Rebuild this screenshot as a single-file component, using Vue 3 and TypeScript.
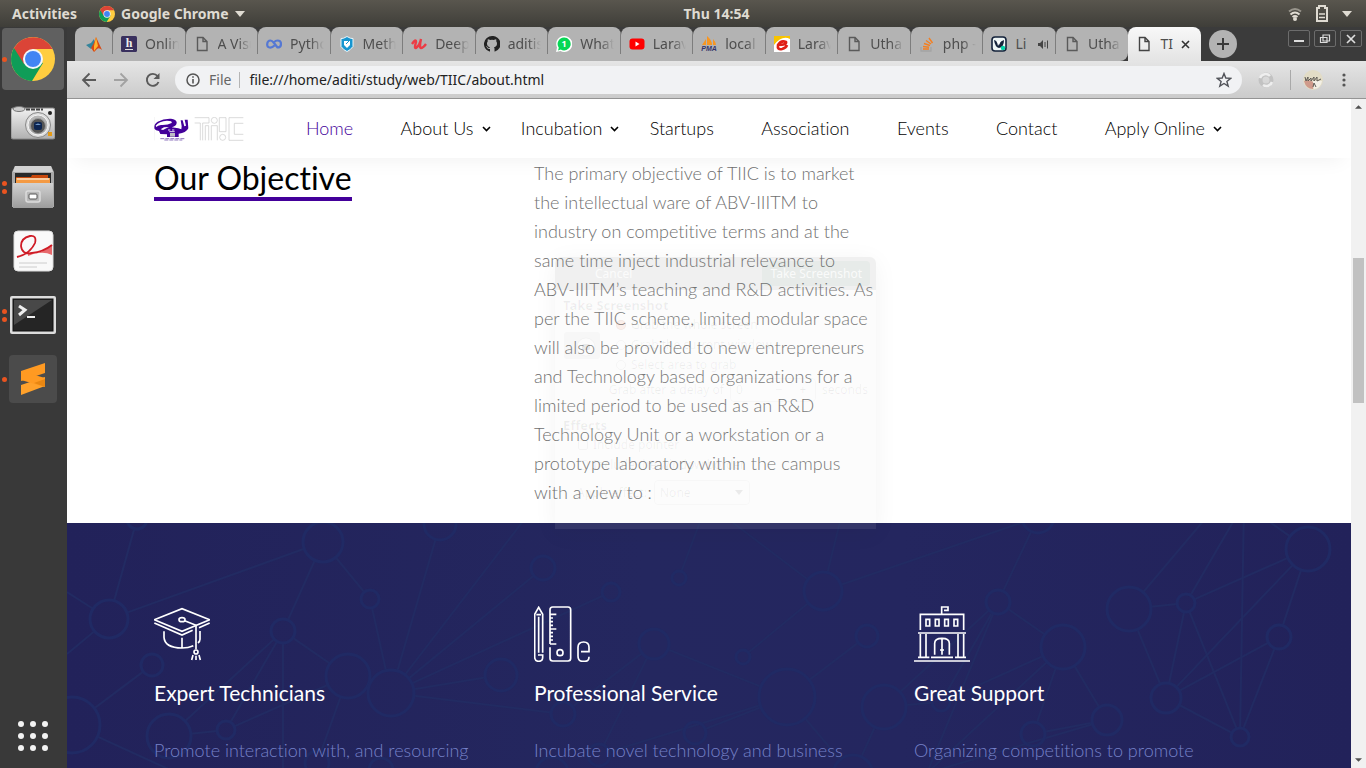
<script setup lang="ts">
interface Tab { icon: string; title: string; sound?: boolean }
interface NavItem { label: string; menu?: boolean; current?: boolean }
interface Feature { icon: string; title: string; text: string }

const tabs: Tab[] = [
  { icon: 'hack', title: 'Online' },
  { icon: 'page', title: 'A Visu' },
  { icon: 'colab', title: 'Python' },
  { icon: 'shield', title: 'Metho' },
  { icon: 'udemy', title: 'Deep L' },
  { icon: 'github', title: 'aditisin' },
  { icon: 'whatsapp', title: 'Whats' },
  { icon: 'youtube', title: 'Larave' },
  { icon: 'pma', title: 'local' },
  { icon: 'edu', title: 'Larave' },
  { icon: 'page', title: 'Utha' },
  { icon: 'stack', title: 'php -' },
  { icon: 'video', title: 'Li', sound: true },
  { icon: 'page', title: 'Utha' },
]

const nav: NavItem[] = [
  { label: 'Home', current: true },
  { label: 'About Us', menu: true },
  { label: 'Incubation', menu: true },
  { label: 'Startups' },
  { label: 'Association' },
  { label: 'Events' },
  { label: 'Contact' },
  { label: 'Apply Online', menu: true },
]

const dock = [
  { id: 'chrome', label: 'Google Chrome', dots: 1, active: true },
  { id: 'camera', label: 'Screenshot', dots: 0 },
  { id: 'files', label: 'Files', dots: 2 },
  { id: 'reader', label: 'Document Viewer', dots: 0 },
  { id: 'terminal', label: 'Terminal', dots: 2 },
  { id: 'sublime', label: 'Sublime Text', dots: 1 },
]

const objective = [
  'The primary objective of TIIC is to market',
  'the intellectual ware of ABV-IIITM to',
  'industry on competitive terms and at the',
  'same time inject industrial relevance to',
  'ABV-IIITM’s teaching and R&D activities. As',
  'per the TIIC scheme, limited modular space',
  'will also be provided to new entrepreneurs',
  'and Technology based organizations for a',
  'limited period to be used as an R&D',
  'Technology Unit or a workstation or a',
  'prototype laboratory within the campus',
  'with a view to :',
]

const features: Feature[] = [
  { icon: 'cap', title: 'Expert Technicians', text: 'Promote interaction with, and resourcing' },
  { icon: 'tools', title: 'Professional Service', text: 'Incubate novel technology and business' },
  { icon: 'school', title: 'Great Support', text: 'Organizing competitions to promote' },
]

// Network backdrop: x, y, radius. Zero-radius nodes are line ends beyond the edge.
const nodes: [number, number, number][] = [
  [42, 96, 19], [256, 19, 20], [70, -4, 10], [303, 76, 9], [216, 108, 12],
  [85, 142, 11], [5, 202, 28], [281, 153, 22], [324, 170, 23], [373, 1, 16],
  [102, 213, 22], [159, 207, 9], [250, 240, 12], [314, 247, 12], [434, 152, 16],
  [476, 45, 12], [544, 69, 9], [612, 55, 7], [756, 68, 19], [587, 121, 15],
  [676, 134, 7], [800, 113, 11], [720, 174, 28], [496, 191, 12], [628, 210, 11],
  [532, 232, 11], [485, 250, 16], [817, 184, 22], [786, 252, 20], [971, -6, 16],
  [931, 79, 12], [996, 124, 22], [1062, 86, 22], [1119, 80, 9], [1241, 26, 22],
  [1212, 114, 12], [1099, 175, 15], [1040, 197, 15], [966, 211, 12], [1173, 214, 9],
  [874, 179, 9],
  [0, 69, 0], [0, 131, 0], [216, 250, 0], [470, -20, 0], [500, -40, 0],
  [640, -20, 0], [780, -30, 0], [1177, -20, 0], [1160, -30, 0], [1120, -30, 0],
  [560, -20, 0], [110, 250, 0], [1284, 225, 0], [1190, -10, 0], [860, 250, 0],
]

const links: [number, number][] = [
  [0, 2], [0, 1], [0, 41], [0, 42], [1, 3], [1, 4], [3, 8], [4, 7], [4, 10], [4, 11],
  [4, 43], [5, 6], [7, 11], [7, 12], [8, 9], [8, 44], [8, 15], [8, 16], [8, 14],
  [8, 23], [10, 11], [6, 52], [17, 46], [18, 46], [18, 47], [18, 29], [18, 20],
  [19, 23], [19, 25], [19, 22], [21, 22], [22, 24], [22, 25], [22, 28], [29, 30],
  [30, 31], [30, 27], [30, 40], [30, 55], [31, 37], [31, 38], [31, 40], [31, 55],
  [27, 40], [27, 28], [32, 33], [32, 36], [32, 49], [33, 34], [33, 36], [33, 39],
  [33, 48], [34, 35], [34, 36], [34, 54], [35, 36], [35, 39], [36, 39], [39, 48],
  [37, 38], [37, 55],
]

const circles = nodes.filter((n) => n[2] > 0)

const lines = links.map(([a, b]) => {
  const [ax, ay, ar] = nodes[a]
  const [bx, by, br] = nodes[b]
  const d = Math.hypot(bx - ax, by - ay)
  const ux = (bx - ax) / d
  const uy = (by - ay) / d
  return { x1: ax + ux * ar, y1: ay + uy * ar, x2: bx - ux * br, y2: by - uy * br }
})
</script>

<template>
  <div class="desktop">
    <header class="topbar">
      <button class="top-btn" type="button">Activities</button>
      <button class="top-btn app-btn" type="button">
        <svg class="i16" viewBox="0 0 44 44"><use href="#chrome-logo" /></svg>
        Google Chrome
        <svg class="caret" viewBox="0 0 10 6"><path d="M0 0h10L5 6z" fill="currentColor" /></svg>
      </button>
      <time class="clock">Thu 14:54</time>
      <button class="top-btn status" type="button" aria-label="System menu">
        <svg width="14" height="14" viewBox="0 0 14 14" fill="none" stroke="currentColor" stroke-width="2">
          <path d="M1 4.500q6-5 12 0" opacity=".5" /><path d="M2.500 7.500q4.500-4 9 0" /><path d="M4.500 10q2.500-2 5 0" /><circle cx="7" cy="12" r="1" fill="currentColor" />
        </svg>
        <svg width="12" height="17" viewBox="0 0 12 17" fill="none" stroke="currentColor" stroke-width="2">
          <path d="M1 3h2V1h6v2h2v13H1z" /><path d="M3 9h6M3 12.500h6" stroke-width="1.500" />
        </svg>
        <svg class="caret" viewBox="0 0 10 6"><path d="M0 0h10L5 6z" fill="currentColor" /></svg>
      </button>
    </header>

    <aside class="dock">
      <button v-for="d in dock" :key="d.id" class="dock-item" :class="{ active: d.active }" type="button" :aria-label="d.label">
        <span class="dots"><i v-for="n in d.dots" :key="n"></i></span>
        <svg v-if="d.id === 'chrome'" width="44" height="44" viewBox="0 0 44 44">
          <g id="chrome-logo">
            <circle cx="22" cy="22" r="22" fill="#ffcd40" />
            <path d="M22 22 3 11A22 22 0 0 0 21 44L32 26z" fill="#0f9d58" />
            <path d="M3 11A22 22 0 0 1 41.500 12H22L13 27z" fill="#db4437" />
            <circle cx="22" cy="22" r="10" fill="#f4f6fa" /><circle cx="22" cy="22" r="8" fill="#4285f4" />
          </g>
        </svg>
        <svg v-else-if="d.id === 'camera'" width="44" height="34" viewBox="0 0 44 34">
          <defs><linearGradient id="metal" x2="0" y2="1"><stop stop-color="#f2f2f2" /><stop offset="1" stop-color="#b0b0b0" /></linearGradient></defs>
          <rect y="2" width="44" height="31" rx="2" fill="url(#metal)" stroke="#888" />
          <ellipse cx="8" cy="3" rx="6" ry="2.500" fill="#ccc" stroke="#777" /><path d="M15 3.500h17" stroke="#444" stroke-width="2" stroke-dasharray="4 1" />
          <circle cx="27" cy="19" r="12.500" fill="#ddd" stroke="#888" /><circle cx="27" cy="19" r="10" fill="#b6b6b6" stroke="#f4f4f4" />
          <circle cx="27" cy="20" r="7.500" fill="#555" stroke="#999" /><rect x="23" y="16" width="8" height="8" rx="2" fill="#0d2550" /><path d="M24 19q3-3 6 0z" fill="#6d96c9" />
          <circle cx="39" cy="7" r="2" fill="#222" /><rect x="37" y="26" width="4" height="4" fill="#e59b16" />
        </svg>
        <svg v-else-if="d.id === 'files'" width="42" height="44" viewBox="0 0 42 44">
          <defs><linearGradient id="steel" x2="0" y2="1"><stop stop-color="#d2d2d2" /><stop offset="1" stop-color="#9c9c9c" /></linearGradient></defs>
          <path d="M3 1h36l3 6v35H0V7z" fill="#aaa" /><path d="M3 1h36l2 6H1z" fill="#d2d2d2" />
          <rect x="3" y="8" width="36" height="11" fill="#292929" /><path d="M4 12h15l1-2h16v7H4z" fill="#c9480b" /><path d="M4 13h34v5H4z" fill="#f49a43" /><path d="M5 14h32" stroke="#fff" />
          <path d="M1 18h40v25H1z" fill="url(#steel)" /><rect x="14" y="26" width="14" height="11" rx="2" fill="#b9b9b9" stroke="#dcdcdc" stroke-width="1.500" /><rect x="17" y="29" width="8" height="5" rx="1" fill="#fff" stroke="#555" />
        </svg>
        <svg v-else-if="d.id === 'reader'" width="41" height="42" viewBox="0 0 41 42">
          <rect x="1" y="1" width="39" height="40" rx="4" fill="#f9f9f9" stroke="#ddd" />
          <path d="M15 24Q29 24 39 15V25Q29 20 15 26z" fill="#e76a6d" />
          <path d="M4 27Q17 24 22 13Q24 5 17 6Q8 8 8 16Q9 25 19 23Q30 22 39 15" fill="none" stroke="#cf1b25" stroke-width="1.800" />
          <path d="M6 33h28M6 37h18" stroke="#ccc" />
        </svg>
        <svg v-else-if="d.id === 'terminal'" width="46" height="38" viewBox="0 0 46 38">
          <rect width="46" height="38" rx="2" fill="#ddd" /><rect x="3" y="3" width="40" height="32" fill="#252525" stroke="#111" /><path d="M4 4h38L4 29z" fill="#484848" />
          <path d="m9 10 6 4-6 5" fill="none" stroke="#eee" stroke-width="3" /><path d="M17 21h8" stroke="#eee" stroke-width="2" />
        </svg>
        <svg v-else width="48" height="48" viewBox="0 0 48 48">
          <rect width="48" height="48" rx="4" fill="#4b4b4b" />
          <path d="m12 16 24-8v10L12 26z" fill="#ff9a22" /><path d="m12 30 24-8v9L12 40z" fill="#ffa12b" /><path d="m12 16 24 7v9l-24-7z" fill="#ff9a22" /><path d="m25 28 11-4v8z" fill="#e88612" />
        </svg>
      </button>
      <button class="apps" type="button" aria-label="Show applications"><i v-for="n in 9" :key="n"></i></button>
    </aside>

    <div class="browser">
      <div class="strip">
        <div class="tabs" role="tablist">
          <button class="tab pinned" role="tab" type="button" aria-label="MATLAB">
            <svg class="i16" viewBox="0 0 16 16"><path d="m0 9 5-2 3-4 1 5-4 5z" fill="#35849b" /><path d="M5 12Q8 8 10 1l6 13q-3-3-5-1l-3 3z" fill="#d84813" /><path d="m8 10 2-9 2 9-4 5z" fill="#ffb32b" /></svg>
          </button>
          <button v-for="(t, i) in tabs" :key="i" class="tab" :class="{ last: i === tabs.length - 1 }" role="tab" type="button">
            <svg class="i16" viewBox="0 0 16 16">
              <template v-if="t.icon === 'page'"><path d="M3.500 1.500h5.500l4 4v9h-9.500zM9 1.500v4h4" fill="none" stroke="#5a5a5a" stroke-width="1.400" /></template>
              <template v-else-if="t.icon === 'hack'"><rect width="16" height="16" rx="1.500" fill="#39305e" /><text x="8" y="11" text-anchor="middle" class="fav-h">h</text><path d="M4 13.500h8" stroke="#ddd" /></template>
              <template v-else-if="t.icon === 'colab'"><path d="M8.500 9.500Q6 12 3.500 11.500Q1 11 1.200 8Q1.500 4.500 4.500 4.500Q6 4.500 8 7T11.500 11.500Q15 11.500 15 8T11.500 4.500Q9.500 4.500 8.500 5.800" fill="none" stroke="#5578d3" stroke-width="2.200" /></template>
              <template v-else-if="t.icon === 'shield'"><path d="M8 0.500q4 2.500 6 2v8q-3 4-6 5-3-1-6-5V2.500q2 .5 6-2z" fill="#1795cf" stroke="#eaf6fb" /><path d="M5 5h6v4l-3 3-3-3z" fill="#fff" /><path d="m7 8 4-4" stroke="#1795cf" /></template>
              <template v-else-if="t.icon === 'udemy'"><path d="M1 8q4-6 4-2-2 7 0 6 4-3 5-9-2 9 0 9t5-4" fill="none" stroke="#ec3c45" stroke-width="2.400" /></template>
              <template v-else-if="t.icon === 'github'"><path d="M8 0a8 8 0 0 0-2.500 15.600c.5 0 .5-.3.500-.6v-2c-2 .4-2.700-.6-3-1.400-.2-.4-.6-1-1-1.200 1.400-.4 1.600 1.800 3 1.600.5 0 .9-.3 1-.8C4 11 3 9.500 3 7.500c0-1 .3-1.600.8-2.200-.2-.6-.2-1.400.1-2.100.9 0 1.600.4 2.200.8a7 7 0 0 1 3.800 0c.6-.4 1.300-.8 2.200-.8.3.7.300 1.500.1 2.100.5.600.8 1.200.8 2.200 0 2-1 3.500-3 3.700.4.300.5.900.5 1.500V15c0 .3 0 .6.500.6A8 8 0 0 0 8 0z" fill="#222" /></template>
              <template v-else-if="t.icon === 'whatsapp'"><path d="M8 0a8 8 0 1 1-3.500 15L0 16l1-4.500A8 8 0 0 1 8 0z" fill="#fff" /><path d="M8 1.500a6.500 6.500 0 1 1-3.300 12L2 14.500l.8-2.800A6.500 6.500 0 0 1 8 1.500z" fill="#07d755" /><text x="8" y="11" text-anchor="middle" class="fav-one">1</text></template>
              <template v-else-if="t.icon === 'youtube'"><rect x=".5" y="2.500" width="15" height="11" rx="3" fill="#f00" /><path d="m6.500 5.500 4 2.500-4 2.500z" fill="#fff" /></template>
              <template v-else-if="t.icon === 'pma'"><path d="M1 9 5 3v6zM6 9V0q5 4 5 9zM12 9V3q3 3 3 6z" fill="#f79622" /><text x="8" y="15" text-anchor="middle" class="fav-pma">PMA</text></template>
              <template v-else-if="t.icon === 'edu'"><rect width="16" height="16" fill="#fff" /><path d="M0 0h16v3Q8-1 0 9z" fill="#f8c400" /><path d="M4 9q9 0 8-3-5-2-8 3-1 5 4 4 4-1 5-4" fill="none" stroke="#e01f16" stroke-width="2.600" /></template>
              <template v-else-if="t.icon === 'stack'"><path d="M2 11v4h10v-4" fill="none" stroke="#a4a4a4" stroke-width="1.300" /><path d="M4 13h6M4 10.500l6 .7M5 7.500l6 2M7 4.500l5 3.500M10 2l3.500 5" stroke="#f47f20" stroke-width="1.400" /></template>
              <template v-else><rect x="1" y="1" width="14" height="14" rx="3" fill="#eef5f5" stroke="#15233b" stroke-width="1.600" /><path d="M3 4q3 0 4 6l2-4 4-2q0 7-5 8-4-1-5-8z" fill="#15233b" /><path d="m6 5 2 4 2-4z" fill="#fff" /><circle cx="12" cy="12" r="2.200" fill="#00d4a8" /></template>
            </svg>
            <span class="tab-title">{{ t.title }}</span>
            <svg v-if="t.sound" class="sound" width="11" height="11" viewBox="0 0 11 11"><path d="M0 4h2l3-3v9L2 7H0z" fill="#444" /><path d="M7 3v5M9.500 1.500v8" stroke="#444" /></svg>
          </button>
          <div class="tab current" role="tab" aria-selected="true">
            <svg class="i16" viewBox="0 0 16 16"><path d="M3.500 1.500h5.500l4 4v9h-9.500zM9 1.500v4h4" fill="none" stroke="#444" stroke-width="1.400" /></svg>
            <span class="tab-title">TI</span>
            <button class="close" type="button" aria-label="Close tab"><svg width="9" height="9" viewBox="0 0 9 9"><path d="m1 1 7 7M8 1 1 8" stroke="#333" stroke-width="1.600" /></svg></button>
          </div>
        </div>
        <button class="new-tab" type="button" aria-label="New tab"><svg width="12" height="12" viewBox="0 0 12 12"><path d="M6 0v12M0 6h12" stroke="#3a3a3a" stroke-width="2" /></svg></button>
        <div class="win">
          <button type="button" aria-label="Minimize"><svg width="12" height="12" viewBox="0 0 12 12"><path d="M1 8h10" stroke="#ddd" stroke-width="2" /></svg></button>
          <button type="button" aria-label="Restore"><svg width="12" height="12" viewBox="0 0 12 12" fill="none" stroke="#ddd" stroke-width="1.200"><path d="M4 2h6.500v6H4zM1.500 4.500H8v5H1.500z" /></svg></button>
          <button type="button" aria-label="Close"><svg width="12" height="12" viewBox="0 0 12 12"><path d="m2 2 8 8m0-8-8 8" stroke="#ddd" stroke-width="1.700" /></svg></button>
        </div>
      </div>

      <div class="toolbar">
        <button type="button" aria-label="Back"><svg width="16" height="16" viewBox="0 0 16 16" fill="none" stroke="#5a5a5a" stroke-width="1.800"><path d="M15 8H2m6.500-6.500L2 8l6.500 6.500" /></svg></button>
        <button type="button" aria-label="Forward"><svg width="16" height="16" viewBox="0 0 16 16" fill="none" stroke="#a2a2a2" stroke-width="1.800"><path d="M1 8h13M7.500 1.500 14 8l-6.500 6.500" /></svg></button>
        <button type="button" aria-label="Reload"><svg width="16" height="16" viewBox="0 0 16 16"><path d="M13.500 10A6 6 0 1 1 12.500 4" fill="none" stroke="#5a5a5a" stroke-width="1.900" /><path d="M14.500 1v6h-6z" fill="#5a5a5a" /></svg></button>
        <div class="omnibox">
          <svg width="14" height="14" viewBox="0 0 14 14"><circle cx="7" cy="7" r="6" fill="none" stroke="#555" stroke-width="1.500" /><path d="M7 6v4.500M7 3.200v1.600" stroke="#555" stroke-width="1.600" /></svg>
          <label for="url">File</label>
          <input id="url" type="text" value="file:///home/aditi/study/web/TIIC/about.html" spellcheck="false" />
          <button type="button" aria-label="Bookmark"><svg width="16" height="16" viewBox="0 0 16 16"><path d="m8 1.500 1.800 4.500 4.900.3-3.800 3.100 1.300 4.700L8 11.500l-4.200 2.600 1.300-4.700-3.800-3.100L6.200 6z" fill="none" stroke="#505258" stroke-width="1.400" /></svg></button>
        </div>
        <button type="button" class="ext" aria-label="Extension"><svg width="16" height="16" viewBox="0 0 16 16" fill="none"><circle cx="8" cy="8" r="5.500" stroke="#c2c2c2" stroke-width="4" /><path d="M2 6a6 6 0 0 1 10-2M14 10a6 6 0 0 1-9 3" stroke="#eee" stroke-width="2.500" /></svg></button>
        <button type="button" class="avatar" aria-label="Profile"><svg width="20" height="20" viewBox="0 0 20 20"><circle cx="10" cy="10" r="10" fill="#e2dcc6" /><path d="M1 11q5-2 9 1v7Q3 19 1 11z" fill="#cf9a8b" /><path d="M10 11h9q-1 7-8 8z" fill="#f3f0e6" /><path d="m2 7 1 4 2-4v4l3-3v3l3-4v4l3-4v4l4-2M11 13l-1 4m1-4 2 4" fill="none" stroke="#5d5852" /></svg></button>
        <button type="button" aria-label="Menu"><svg width="4" height="14" viewBox="0 0 4 14" fill="#555"><circle cx="2" cy="2" r="1.600" /><circle cx="2" cy="7" r="1.600" /><circle cx="2" cy="12" r="1.600" /></svg></button>
      </div>

      <div class="view">
        <main class="page">
          <header class="site-header">
            <div class="container header-row">
              <a href="#" class="logo" aria-label="TIIC">
                <svg width="90" height="24" viewBox="261 62 270 72">
                  <path d="M262 97Q259 84 272 76Q290 66 312 67Q328 69 329 78Q330 88 314 93L334 96L343 99L344 90L341 72H347L352 90L357 88L353 70L362 70L364 96Q357 111 335 112V122H300V114L280 113L276 104Q266 103 262 97z" fill="#43009a" />
                  <path d="M266 88Q276 75 300 73Q317 73 314 80Q302 87 282 86Q272 87 268 92zM281 99 291 93 306 92 298 96 288 101z" fill="#fff" />
                  <path d="M309 110h15v11h-15z" fill="#bdbdc4" /><path d="M303 101h7M315 101h7M307 106h16" stroke="#e8e4f4" stroke-width="3" />
                  <path d="M280 127H354M292 131H346" stroke="#8f76bd" stroke-width="3" stroke-dasharray="12 3" />
                  <path d="M262 62V132" stroke="#ddd" />
                  <g fill="none" stroke="#c8c8c8" stroke-width="2"><path d="M383 64H426V80H407V132M383 80H400V132M415 132V88H425V132M433 132V88H451V132M457 64H477V106H457z" /><circle cx="442" cy="72" r="9" /><circle cx="467" cy="123" r="9" /><path d="M529 64H486V132H529M529 81H502V114H529" /></g>
                </svg>
              </a>
              <nav>
                <a v-for="n in nav" :key="n.label" href="#" :class="{ here: n.current, menu: n.menu }">{{ n.label }}<svg v-if="n.menu" width="9" height="6" viewBox="0 0 9 6"><path d="M1 1l3.500 3.500L8 1" fill="none" stroke="currentColor" stroke-width="1.600" /></svg></a>
              </nav>
            </div>
          </header>

          <section class="container objective">
            <h2>Our Objective</h2>
            <p><template v-for="(l, i) in objective" :key="i">{{ l }}<br /></template></p>
          </section>

          <section class="features">
            <svg class="network" viewBox="0 0 1284 245" preserveAspectRatio="xMidYMin slice" fill="none" aria-hidden="true">
              <line v-for="(l, i) in lines" :key="i" :x1="l.x1" :y1="l.y1" :x2="l.x2" :y2="l.y2" stroke="#222b62" stroke-width="2" />
              <circle v-for="(n, i) in circles" :key="'c' + i" :cx="n[0]" :cy="n[1]" :r="n[2]" stroke="#202a64" stroke-width="3" />
            </svg>
            <div class="container cols">
              <article v-for="f in features" :key="f.title">
                <svg v-if="f.icon === 'cap'" class="ficon" viewBox="462 258 168 168">
                  <path d="M463 299 546 266 629 299 546 334zM463 309 546 345 578 331M597 323 629 309" />
                  <ellipse cx="546" cy="299" rx="9" ry="6" /><path d="M554 302 588 316V388M492 334V352Q494 383 546 384Q565 384 580 377M600 333V358Q600 364 594 369M546 353V384" />
                  <circle cx="588" cy="396" r="6" /><path d="M579 405 575 420M588 407V420M597 405 601 420" />
                </svg>
                <svg v-else-if="f.icon === 'tools'" class="ficon" viewBox="102 258 168 168">
                  <path d="M128 398V283L116 262L104 283V412Q105 424 116 424Q128 424 128 412V405H114M116 290V398M109 284H123" />
                  <path d="M150 372V269Q150 261 158 261H204Q212 261 212 269V415Q212 423 204 423H158Q150 423 150 415V382M150 283H169M150 294H159M150 305H159M150 316H159M150 327H169M150 338H159M150 349H159M150 360H159M150 372H169" />
                  <circle cx="180" cy="398" r="9" /><path d="M243 395H267V382Q267 366 251 366Q234 366 234 382V408Q234 424 248 424H254Q267 424 267 410" />
                </svg>
                <svg v-else class="ficon" viewBox="42 258 168 168">
                  <path d="M42 423H210M54 412H88M93 412H159M165 412H198M54 339H198M61 330V283H191V330M125 283V261H144V271H132M61 342V410M78 342V410M174 342V410M191 342V410M104 404V370Q104 355 126 355Q148 355 148 370V404M126 356V404M120 390H132" />
                  <path d="M78 298H89V318H78zM106 298H117V318H106zM134 298H145V318H134zM162 298H173V318H162z" />
                </svg>
                <h3>{{ f.title }}</h3>
                <p>{{ f.text }}</p>
              </article>
            </div>
          </section>

          <form class="ghost" @submit.prevent>
            <div class="ghost-bar"><button type="button">Cancel</button><button type="submit" class="go">Take Screenshot</button></div>
            <div class="ghost-body">
              <strong>Take Screenshot</strong>
              <div class="ghost-pick">
                <svg width="36" height="27" viewBox="0 0 36 27"><rect width="36" height="27" rx="3" fill="#000" opacity=".3" /><circle cx="22" cy="15" r="9" fill="#fff" stroke="#000" stroke-opacity=".4" /><rect x="18" y="12" width="8" height="6" rx="2" fill="#000" /></svg>
                <div>
                  <label><input type="radio" name="area" checked />Grab the whole screen</label>
                  <label><input type="radio" name="area" />Grab the current window</label>
                  <label><input type="radio" name="area" />Select area to grab</label>
                </div>
              </div>
              <div class="ghost-delay"><label for="delay">Grab after a delay of</label><span class="spin"><input id="delay" type="text" value="0" /><button type="button">−</button><button type="button">+</button></span>seconds</div>
              <strong class="fx">Effects</strong>
              <label class="check"><input type="checkbox" />Include pointer</label>
              <label class="check"><input type="checkbox" />Include the window border</label>
              <div class="ghost-effect"><label for="effect">Apply effect:</label><select id="effect"><option>None</option></select><svg class="caret" viewBox="0 0 10 6"><path d="M0 0h10L5 6z" /></svg></div>
            </div>
          </form>
        </main>
        <div class="scroll" aria-hidden="true">
          <svg viewBox="0 0 8 4"><path d="M0 4h8L4 0z" /></svg>
          <span class="track"><i></i></span>
          <svg viewBox="0 0 8 4"><path d="M0 0h8L4 4z" /></svg>
        </div>
      </div>
    </div>
  </div>
</template>

<style>
html, body { margin: 0; overflow: hidden; }
</style>

<style scoped>
* { box-sizing: border-box; }
svg { flex: none; display: block; }
button { font: inherit; color: inherit; background: none; border: 0; padding: 0; }
input, select { font: inherit; color: inherit; }
.desktop {
  height: 100vh; display: grid; grid-template: 27px minmax(0, 1fr) / 67px minmax(0, 1fr);
  background: #3a3a3a; font-family: "Noto Sans", sans-serif; overflow: hidden;
}
.i16 { width: 16px; height: 16px; }
.caret { width: 10px; height: 6px; }
.fav-h { font: bold 12px "Liberation Serif", serif; fill: #eee; }
.fav-one { font: bold 9px "Noto Sans", sans-serif; fill: #fff; }
.fav-pma { font: italic bold 7px "Liberation Sans", sans-serif; fill: #33336b; }

.topbar {
  grid-column: 1 / -1; display: grid; position: relative;
  grid-template-columns: auto 1fr auto; align-items: center; padding: 0 14px 0 12px;
  background: linear-gradient(#59564e, #3f3e39); color: #dfdbd2; font-size: 14px; font-weight: 700;
}
.top-btn { display: flex; align-items: center; line-height: 20px; }
.app-btn { margin-left: 22px; gap: 6px; justify-self: start; }
.clock { position: absolute; left: 67px; right: 0; margin: auto; width: max-content; line-height: 20px; }
.status { gap: 14px; }

.dock { display: flex; flex-direction: column; align-items: center; gap: 2px; padding: 1px 1px 17px 0; background: #393939; }
.dock-item { position: relative; display: grid; place-items: center; width: 62px; height: 62px; border-radius: 4px; }
.dock-item.active { background: #606060; }
.dots { position: absolute; left: 0; top: 0; bottom: 0; display: flex; flex-direction: column; justify-content: center; gap: 3px; }
.dots i { width: 5px; height: 5px; border-radius: 50%; background: #e95420; }
.apps { margin-top: auto; display: grid; grid-template-columns: repeat(3, 6px); gap: 6px; }
.apps i { width: 6px; height: 6px; border-radius: 50%; background: #f2f2f2; }

.browser { display: flex; flex-direction: column; min-width: 0; min-height: 0; }
.strip { display: flex; height: 34px; padding: 0 4px 0 8px; background: #3b3b3b; }
.tabs { flex: 1; display: flex; min-width: 0; }
.tab {
  flex: 1 1 0; min-width: 0; position: relative; display: flex; align-items: center; gap: 8px; padding: 0 7px 0 8px;
  background: #b3b3b3; color: #4e4e4e; border-radius: 8px 8px 0 0; font-size: 14px; overflow: hidden; text-align: left;
}
.tab::after { content: ""; position: absolute; right: 0; top: 4px; bottom: 7px; width: 1px; background: #7d7d7d; }
.tab.pinned { flex: 0 0 38px; padding: 0 11px; }
.tab.last::after, .tab.current::after { display: none; }
.tab.last { border-radius: 8px 8px 8px 0; }
.tab.current { background: linear-gradient(#f8f8f8, #e4e4e4); }
.tab-title { flex: 1; min-width: 0; overflow: hidden; white-space: nowrap; line-height: 20px; -webkit-mask: linear-gradient(90deg, #000 60%, transparent); mask: linear-gradient(90deg, #000 60%, transparent); }
.tab.current .tab-title, .tab:has(.sound) .tab-title { -webkit-mask: none; mask: none; }
.close { margin-right: 4px; }
.new-tab { display: grid; place-items: center; width: 28px; height: 28px; margin: 3px 0 0 8px; border-radius: 50%; background: #b3b3b3; }
.win { display: flex; gap: 4px; margin: 3px 0 0 51px; }
.win button { display: grid; place-items: center; width: 22px; height: 17px; border: 1px solid #6c6c6c; border-radius: 2px; }

.toolbar { display: flex; align-items: center; height: 38px; padding: 0 20px 0 14px; gap: 16px; background: linear-gradient(#e5e5e5, #cbcbcb); border-bottom: 1px solid #949494; }
.omnibox { flex: 1; display: flex; align-items: center; height: 28px; margin-left: -2px; padding: 0 10px 0 11px; border-radius: 14px; background: #f1f2f4; font-size: 14px; }
.omnibox label { margin: 0 9px; padding-right: 8px; border-right: 1px solid #b5b5b5; color: #666; line-height: 16px; }
.omnibox input { flex: 1; border: 0; padding: 0; background: none; color: #222; outline: 0; }
.avatar { margin-right: 3px; padding-left: 12px; border-left: 1px solid #a9a9a9; }

.view { flex: 1; display: flex; min-height: 0; background: #fff; }
.page {
  flex: 1; min-width: 0; position: relative; overflow: hidden; font-family: Lato, sans-serif; font-size: 18px; font-weight: 300; line-height: 29px;
  font-variant-ligatures: none;
}
.container { width: 100%; max-width: 1140px; margin: 0 auto; padding: 0 15px; }
.site-header { position: relative; background: #fff; box-shadow: 0 10px 20px -8px rgba(0, 0, 0, .06); }
.header-row { display: flex; align-items: center; height: 59px; }
nav { flex: 1; display: flex; justify-content: space-between; margin: 0 42px 0 62px; }
nav a { display: flex; align-items: center; color: #000; text-decoration: none; padding-right: 17px; }
nav a.menu { padding-right: 0; gap: 8px; }
nav a.here { color: #43009a; }
.objective, .cols { display: grid; grid-template-columns: repeat(3, 1fr); column-gap: 30px; }
.objective { padding-top: 1px; padding-bottom: 16px; }
h2 { justify-self: start; align-self: start; margin: 0; font-size: 32px; line-height: 38px; font-weight: 400; color: #000; border-bottom: 4px solid #43009a; }
.objective p { margin: 0; color: #707070; white-space: nowrap; }
.features { position: relative; min-height: 245px; padding: 83px 0 80px; background: linear-gradient(90deg, #22225a, #24275f 45%, #24265f 65%, #22225a); color: #fff; }
.network { position: absolute; inset: 0; width: 100%; height: 245px; }
.cols { position: relative; }
.ficon { width: 56px; height: 56px; fill: none; stroke: #fff; stroke-width: 5; }
h3 { margin: 19px 0 31px; font-size: 21px; line-height: 24px; font-weight: 400; }
.features p { margin: 0; color: #7581c8; white-space: nowrap; }

.ghost {
  position: absolute; left: 488px; top: 158px; width: 321px; height: 272px; border-radius: 6px 6px 0 0; pointer-events: none;
  background: rgba(255, 255, 255, .08); box-shadow: 0 4px 24px rgba(0, 0, 0, .05); color: rgba(0, 0, 0, .06);
  font: 12px/20px "Noto Sans", sans-serif;
}
.ghost::before { content: ""; position: absolute; inset: 33px 0 0; background: rgba(0, 0, 0, .01); }
.ghost > * { position: relative; }
.ghost-bar { display: flex; justify-content: space-between; height: 33px; padding: 4px 6px; border-radius: 6px 6px 0 0; background: rgba(0, 0, 0, .06); color: rgba(255, 255, 255, .8); }
.ghost-bar button { padding: 0 8px; margin-left: 26px; }
.ghost-bar .go { background: rgba(80, 160, 110, .05); border-radius: 4px; }
.ghost-body { padding: 5px 8px; }
.ghost strong { display: block; font-size: 13px; }
.ghost-pick { display: flex; gap: 16px; align-items: center; }
.ghost-pick svg { opacity: .07; margin-left: 1px; }
.ghost-pick label, .check { display: flex; align-items: center; gap: 5px; line-height: 20px; }
.ghost input[type="radio"], .ghost input[type="checkbox"] { appearance: none; width: 10px; height: 10px; margin: 0; border: 1px solid rgba(0, 0, 0, .03); border-radius: 50%; }
.ghost input[type="checkbox"] { border-radius: 2px; }
.ghost input[type="radio"]:checked { background: rgba(233, 84, 32, .08); }
.ghost-delay { display: flex; align-items: center; justify-content: flex-end; gap: 6px; height: 30px; }
.spin { display: flex; height: 24px; border: 1px solid rgba(0, 0, 0, .02); border-radius: 4px; }
.spin input { width: 36px; padding: 0 5px; border: 0; background: none; }
.spin button { width: 24px; }
.ghost .fx { margin-top: 10px; }
.check { padding-left: 15px; }
.ghost-effect { display: flex; align-items: center; margin-top: 5px; padding-left: 14px; position: relative; }
.ghost-effect label { width: 77px; }
.ghost-effect select { appearance: none; width: 96px; height: 25px; padding: 0 5px; background: none; border: 1px solid rgba(0, 0, 0, .02); border-radius: 4px; }
.ghost-effect .caret { width: 8px; height: 5px; margin-left: -15px; fill: rgba(0, 0, 0, .07); }

.scroll { display: flex; flex-direction: column; align-items: center; width: 15px; padding: 6px 0; background: #f1f1f1; }
.scroll svg { width: 7px; height: 4px; fill: #505050; }
.track { flex: 1; width: 100%; padding: 0 2px; display: grid; grid-template-rows: 149fr 145fr 355fr; }
.track i { grid-row: 2; background: #c1c1c1; }
</style>
